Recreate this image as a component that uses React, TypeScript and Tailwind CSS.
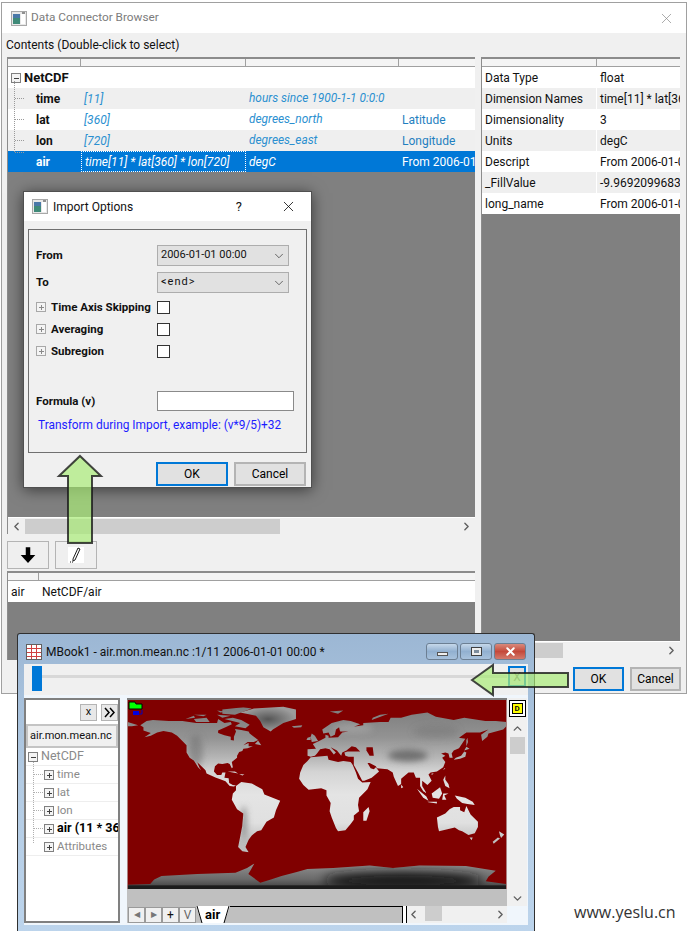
import { ChevronDown, ChevronLeft, ChevronRight, ChevronUp, X } from "lucide-react";

const contentRows = [
  { name: "time", dims: "[11]", units: "hours since 1900-1-1 0:0:0", desc: "", shade: true },
  { name: "lat", dims: "[360]", units: "degrees_north", desc: "Latitude", shade: false },
  { name: "lon", dims: "[720]", units: "degrees_east", desc: "Longitude", shade: true },
];

const attrRows = [
  ["Data Type", "float"],
  ["Dimension Names", "time[11] * lat[360] * lon[720]"],
  ["Dimensionality", "3"],
  ["Units", "degC"],
  ["Descript", "From 2006-01-01 00:00"],
  ["_FillValue", "-9.96920996838687e+36"],
  ["long_name", "From 2006-01-01 00:00"],
];

// rough coastlines as lon,lat pairs
const land: number[][][] = [
  [[-168,66],[-162,70],[-156,71],[-141,70],[-128,70],[-115,68],[-108,68],[-95,68],[-94,72],[-88,68],[-82,69],[-81,67],[-87,64],[-94,61],[-94,58.5],[-88,56.5],[-82,55],[-82,52],[-79,51.5],[-79,55],[-77,60],[-78,62.5],[-72,61.5],[-65,60],[-64,58],[-60,55],[-56,52],[-60,50],[-66,50],[-70,47],[-65,49],[-65,46],[-61,46],[-66,44],[-70,43.5],[-71,41.5],[-74,40.5],[-76,37],[-76,35],[-81,31],[-80,26],[-81,25],[-83,29],[-85,30],[-90,29],[-94,29.5],[-97,27],[-98,22],[-95,18.5],[-91,18.5],[-90,21],[-87,21],[-88,16],[-84,15.5],[-83.5,11],[-80,9],[-77,8.5],[-79,7.5],[-83,8],[-87,12.5],[-92,14.5],[-96,16],[-105,20],[-106,23],[-112,29],[-114,31],[-112,26],[-110,23],[-113,26],[-117,32.5],[-121,35],[-124,40],[-124,47],[-128,51],[-133,56],[-138,59],[-146,60.5],[-152,59],[-158,56],[-164,54.5],[-158,58.5],[-165,61],[-165,64]],
  [[-80,73],[-72,71],[-64,66.5],[-68,63],[-78,65],[-73,68],[-88,72]],
  [[-117,72],[-105,73],[-102,69],[-115,69]],
  [[-125,72],[-117,75],[-116,73]],
  [[-90,77],[-78,76],[-62,82],[-70,83],[-90,81]],
  [[-95,76],[-82,75],[-90,73]],
  [[-117,76],[-105,76],[-108,74.5]],
  [[-95,80],[-87,79],[-92,78]],
  [[-59,48],[-53,47],[-56,51.5]],
  [[-85,22],[-75,20],[-78,22]],
  [[-74,19.5],[-69,19],[-71,18]],
  [[-77,8],[-72,12],[-62,10.5],[-52,5],[-50,0],[-44,-2.5],[-35,-6],[-39,-15],[-41,-22],[-48,-26],[-53,-34],[-57,-35],[-62,-39],[-65,-43],[-68,-50],[-65,-55],[-71,-54],[-75,-50],[-73,-40],[-71,-30],[-70,-18],[-76,-14],[-81,-5],[-80,1],[-77,4]],
  [[-6,35.5],[10,37],[11,33],[20,31],[25,32],[32,31],[34,28],[37,21],[39,15],[43,11.5],[51,12],[48,5],[40,-3],[39,-10],[40,-16],[35,-20],[35,-24],[32,-28],[27,-34],[20,-35],[18,-32],[14,-22],[12,-16],[13,-8],[9,-1],[9,4],[4,6],[-4,5],[-8,4.5],[-13,9],[-17,15],[-16,21],[-13,28],[-9,32]],
  [[49,-12],[50,-16],[47,-25],[44,-25],[44,-17]],
  [[-9,37],[-9,43],[-1,43.5],[-4,48],[2,51],[8,54],[8,57],[11,56],[11,54],[20,54.5],[24,59],[30,60],[22,60],[21,64],[24,66],[18,62],[17,57],[13,55],[11,59],[6,58],[5,62],[14,68],[25,71],[32,70],[41,67],[35,64.5],[44,66],[44,68],[60,69],[68,69],[70,73],[80,73],[90,76],[105,78],[113,74],[130,71],[140,73],[160,70],[170,70],[180,69],[180,65],[177,62],[170,60],[163,58],[162,55],[157,51],[156,57],[163,62],[155,59],[142,59],[135,54],[141,53],[135,44],[130,42],[128,39],[129,35],[126,35],[125,39],[122,40],[118,39],[122,37],[119,35],[122,31],[120,26],[114,22],[108,21],[106,19],[109,13],[105,9],[100,13],[100,8],[104,1.5],[101,3],[98,8],[98,16],[94,16],[92,21],[87,21],[80,15],[80,10],[77,8],[73,17],[72,21],[67,24],[57,25],[56,27],[50,30],[48,30],[51,25],[54,24],[56,26],[59,22],[52,16],[45,13],[43,13],[39,21],[35,28],[35,36],[30,36],[27,37],[26,40],[29,41],[41,41],[37,45],[33,46],[28,42],[24,40],[23,37],[19,42],[13,45],[18,40],[16,38],[12,43],[8,44],[3,43],[0,39],[-2,37],[-6,36]],
  [[-180,69],[-170,66],[-176,65],[-180,65]],
  [[-5,50],[1,51],[-2,56],[-5,58],[-6,55]],
  [[-10,52],[-6,52],[-6,55],[-9,54]],
  [[-24,65],[-14,66],[-15,64],[-22,63.5]],
  [[12,79],[25,80],[20,77]],
  [[52,71],[68,77],[60,76],[53,73]],
  [[130,33],[136,34],[141,36],[142,40],[140,41],[137,37],[132,35]],
  [[140,42],[145,43.5],[142,45.5]],
  [[142,46],[143.5,50],[143,54],[142,52]],
  [[80,9.5],[82,7],[80,6]],
  [[120,23],[122,25],[121,25]],
  [[109,18.5],[111,20],[109,20]],
  [[120,14],[122,18],[122,14],[125,10],[126,6],[122,8]],
  [[95,5.5],[104,-2],[106,-6],[101,-3]],
  [[105,-7],[114,-7],[114,-8.5],[106,-7.5]],
  [[109,1],[117,7],[119,1],[116,-4],[110,-3]],
  [[119,-5],[120,1],[125,1],[121,-1],[123,-5]],
  [[131,-1],[141,-3],[148,-7],[150,-10],[143,-9],[138,-8],[133,-4]],
  [[114,-22],[122,-18],[126,-14],[130,-12],[136,-12],[136,-15],[140,-17],[142,-11],[146,-19],[153,-26],[153,-31],[150,-37],[144,-38.5],[138,-35],[135,-34],[131,-31.5],[124,-33],[116,-35],[115,-31]],
  [[145,-41],[148,-41],[147,-43.5]],
  [[173,-35],[178,-38],[175,-41.5],[174,-39]],
  [[172,-41],[174,-42],[168,-47],[167,-45]],
];

const greenland = [[-73,78],[-60,82],[-32,83.5],[-20,81],[-20,72],[-32,68],[-42,62],[-44,60],[-51,64],[-54,70],[-58,75]];
const caspian = [[47,45],[53,45],[54,37],[50,37],[47,42]];

const antarctica =
  "20,585 20,572 88,570 100,556 122,546 230,540 345,536 380,522 402,508 392,526 384,540 420,566 452,556 484,546 530,534 562,525 640,522 750,514 820,522 900,514 1040,516 1130,530 1108,548 1100,562 1161,570 1161,585";

const toPoints = (ring: number[][]) =>
  ring.map(([lon, lat]) => `${20 + ((lon + 180) / 360) * 1142},${15 + ((90 - lat) / 180) * 570}`).join(" ");

function AppIcon() {
  return (
    <svg width="16" height="15" viewBox="0 0 16 15" className="shrink-0">
      <rect x="0.5" y="0.5" width="15" height="14" fill="#e8e8e8" stroke="#a8a8a8" />
      <rect x="2" y="3" width="7" height="10" fill="#3f8a78" />
      <rect x="2" y="3" width="7" height="4" fill="#4a78a8" />
      <rect x="10" y="3" width="4" height="10" fill="#ffffff" />
      <rect x="11" y="1" width="3" height="2" fill="#909090" />
    </svg>
  );
}

function PlusBox({ minus, dark }: { minus?: boolean; dark?: boolean }) {
  const c = dark ? "#404040" : "#8a8a8a";
  return (
    <svg width="10" height="10" viewBox="0 0 10 10" className="shrink-0">
      <rect x="0.5" y="0.5" width="9" height="9" fill="#f4f4f4" stroke={dark ? "#808080" : "#a8a8a8"} />
      <path d="M2.5 5h5" stroke={c} shapeRendering="crispEdges" />
      {!minus && <path d="M5 2.5v5" stroke={c} shapeRendering="crispEdges" />}
    </svg>
  );
}

function HeaderStrip({ stops }: { stops: number[] }) {
  return (
    <div className="h-[8px] shrink-0 bg-[#f4f4f4] border-b border-[#a0a0a0] flex">
      {stops.map((w, i) => (
        <div key={i} style={{ width: w }} className="border-r border-[#a0a0a0] shrink-0" />
      ))}
    </div>
  );
}

function ScrollBar({ thumb, left = 17 }: { thumb: number; left?: number }) {
  return (
    <div className="h-[17px] shrink-0 bg-[#f0f0f0] flex items-center justify-between border-t border-white relative">
      <ChevronLeft size={13} strokeWidth={2.6} className="text-[#606060] ml-[2px]" />
      <div style={{ left, width: thumb }} className="absolute top-[1px] h-[15px] bg-[#cdcdcd]" />
      <ChevronRight size={13} strokeWidth={2.6} className="text-[#606060] mr-[2px]" />
    </div>
  );
}

function Btn({ label, primary, className }: { label: string; primary?: boolean; className: string }) {
  return (
    <div
      className={`flex items-center justify-center bg-[#e1e1e1] text-black text-[12px] ${
        primary ? "border-2 border-[#0078d7]" : "border-2 border-[#b4b4b4]"
      } ${className}`}
    >
      {label}
    </div>
  );
}

function Combo({ text, wide }: { text: string; wide?: boolean }) {
  return (
    <div className="w-[132px] h-[21px] bg-[#e1e1e1] border border-[#adadad] flex items-center justify-between pl-[3px] pr-[2px] text-[11px]">
      <span className={wide ? "tracking-[1px]" : ""}>{text}</span>
      <ChevronDown size={14} strokeWidth={1.3} className="text-[#404040]" />
    </div>
  );
}

function CheckRow({ label }: { label: string }) {
  return (
    <div className="h-[22px] flex items-center">
      <div className="w-[121px] flex items-center gap-[5px] font-bold text-[11.5px] whitespace-nowrap">
        <PlusBox />
        <span className="pt-[1px]">{label}</span>
      </div>
      <div className="w-[13px] h-[13px] bg-white border border-[#333333]" />
    </div>
  );
}

function ImportDialog() {
  return (
    <div className="absolute left-[23px] top-[191px] w-[289px] h-[297px] bg-[#f0f0f0] border border-[#505050] shadow-[0_2px_14px_rgba(0,0,0,0.55)] flex flex-col text-[#111111]">
      <div className="h-[29px] bg-white flex items-center pl-[8px] shrink-0">
        <AppIcon />
        <span className="ml-[5px] text-[12px]">Import Options</span>
        <span className="ml-auto mr-[38px] text-[13px]">?</span>
        <X size={17} strokeWidth={1.1} className="mr-[14px] text-black" />
      </div>
      <div className="mx-[4px] mt-[8px] h-[224px] border border-[#707070] px-[7px] pt-[15px] flex flex-col">
        <div className="h-[21px] flex items-center mb-[6px]">
          <span className="w-[121px] pt-[1px] font-bold text-[11.5px]">From</span>
          <Combo text="2006-01-01 00:00" />
        </div>
        <div className="h-[21px] flex items-center mb-[3px]">
          <span className="w-[121px] pt-[1px] font-bold text-[11.5px]">To</span>
          <Combo text="<end>" wide />
        </div>
        <CheckRow label="Time Axis Skipping" />
        <CheckRow label="Averaging" />
        <CheckRow label="Subregion" />
        <div className="h-[20px] mt-[29px] flex items-center">
          <span className="w-[121px] pt-[1px] font-bold text-[11.5px]">Formula (v)</span>
          <div className="w-[137px] h-[20px] bg-white border border-[#8a8a8a]" />
        </div>
        <div className="mt-[6px] ml-[2px] text-[11.9px] text-[#1c1cff] whitespace-nowrap">
          Transform during Import, example: (v*9/5)+32
        </div>
      </div>
      <div className="flex justify-end gap-[6px] mt-[9px] pr-[5px]">
        <Btn label="OK" primary className="w-[72px] h-[24px]" />
        <Btn label="Cancel" className="w-[72px] h-[24px]" />
      </div>
    </div>
  );
}

function MainWindow() {
  return (
    <div className="absolute left-[1px] top-[2px] w-[686px] h-[692px] bg-[#f0f0f0] border border-[#a0a0a0] flex flex-col text-[12px] text-[#111111]">
      <div className="h-[30px] bg-white flex items-center pl-[9px] pr-[11px] shrink-0">
        <AppIcon />
        <span className="ml-[4px] text-[#7c7c7c] text-[11.8px]">Data Connector Browser</span>
        <X size={17} strokeWidth={1} className="ml-auto text-[#8a8a8a]" />
      </div>
      <div className="h-[24px] pl-[4px] flex items-center shrink-0">Contents (Double-click to select)</div>

      <div className="flex pl-[5px] gap-[6px] shrink-0">
        <div className="w-[468px] flex flex-col">
          {/* variable list */}
          <div className="h-[477px] border-t-2 border-l border-[#8c8c8c] bg-[#808080] flex flex-col relative">
            <HeaderStrip stops={[73, 165, 153]} />
            <div className="h-[21px] bg-white flex items-center pl-[3px] gap-[3px] font-bold text-[13px]">
              <PlusBox minus dark />
              NetCDF
            </div>
            {contentRows.map((r) => (
              <div
                key={r.name}
                className={`h-[21px] grid grid-cols-[73px_165px_153px_1fr] items-center ${r.shade ? "bg-[#efefef]" : "bg-white"}`}
              >
                <span className="pl-[28px] font-bold">{r.name}</span>
                <span className="pl-[3px] italic text-[#2b8fd0]">{r.dims}</span>
                <span className="pl-[3px] italic text-[#2b8fd0] text-[11.9px] whitespace-nowrap">{r.units}</span>
                <span className="pl-[3px] text-[#1f7fc0]">{r.desc}</span>
              </div>
            ))}
            <div className="h-[21px] bg-[#0078d7] text-white grid grid-cols-[73px_165px_153px_1fr] items-center">
              <span className="pl-[28px] font-bold">air</span>
              <span className="pl-[3px] h-full flex items-center italic border border-dotted border-white whitespace-nowrap">
                time[11] * lat[360] * lon[720]
              </span>
              <span className="pl-[3px] italic">degC</span>
              <span className="pl-[3px] whitespace-nowrap overflow-hidden">From 2006-01</span>
            </div>
            {/* tree guide */}
            <svg className="absolute left-[2px] top-[22px]" width="20" height="82" viewBox="0 0 20 82">
              <path
                d="M4.5 0V71M5 17H14M5 38H14M5 59H14M5 71H14"
                fill="none"
                stroke="#9a9a9a"
                strokeDasharray="1 1"
                shapeRendering="crispEdges"
              />
            </svg>
            <div className="mt-auto">
              <ScrollBar thumb={255} />
            </div>
          </div>

          <div className="flex gap-[6px] mt-[7px]">
            <div className="w-[42px] h-[28px] border border-[#b4b4b4] bg-[#efefef] flex items-center justify-center">
              <svg width="18" height="18" viewBox="0 0 16 16">
                <path d="M6 1h4v7h4.5L8 15 1.5 8H6z" fill="#000000" />
              </svg>
            </div>
            <div className="w-[42px] h-[28px] border border-[#b4b4b4] bg-[#efefef] flex items-center justify-center">
              <svg width="16" height="16" viewBox="0 0 16 16" className="bg-white">
                <path d="M10 1l2 1-5 11-2 1 0-2z" fill="#ffffff" stroke="#000000" strokeWidth="0.9" />
                <path d="M2 15h1M4 15h1" stroke="#000000" />
              </svg>
            </div>
          </div>

          {/* selected list */}
          <div className="mt-[2px] h-[89px] border-t-2 border-l border-[#8c8c8c] bg-[#808080] flex flex-col">
            <HeaderStrip stops={[31]} />
            <div className="h-[21px] bg-white flex items-center pl-[3px]">
              <span className="w-[31px]">air</span>
              <span>NetCDF/air</span>
            </div>
          </div>
        </div>

        {/* attributes list */}
        <div className="w-[199px] h-[601px] border-t-2 border-l border-[#8c8c8c] bg-[#808080] flex flex-col">
          <HeaderStrip stops={[115]} />
          {attrRows.map(([k, v], i) => (
            <div
              key={k}
              className={`h-[21px] flex items-center whitespace-nowrap overflow-hidden ${i % 2 ? "bg-[#efefef]" : "bg-white"}`}
            >
              <span className="w-[115px] shrink-0 pl-[3px] border-r border-white h-full flex items-center">{k}</span>
              <span className="pl-[3px]">{v}</span>
            </div>
          ))}
          <div className="mt-auto">
            <ScrollBar thumb={81} left={0} />
          </div>
        </div>
      </div>

      <div className="flex justify-end gap-[6px] mt-[7px] pr-[5px]">
        <Btn label="OK" primary className="w-[51px] h-[24px]" />
        <Btn label="Cancel" className="w-[51px] h-[24px]" />
      </div>
    </div>
  );
}

function WinBtn({ kind }: { kind: "min" | "max" | "close" }) {
  const bg =
    kind === "close"
      ? "bg-gradient-to-b from-[#d9897c] via-[#c4483a] to-[#d2796c]"
      : "bg-gradient-to-b from-[#c6d8ea] via-[#92b0d0] to-[#a8c2dc]";
  return (
    <div className={`w-[32px] h-[17px] rounded-[3px] border border-[#6c7f93] flex items-center justify-center ${bg}`}>
      {kind === "min" && <div className="w-[11px] h-[4px] mt-[4px] bg-[#eeeeee] border border-[#555555]" />}
      {kind === "max" && (
        <div className="w-[11px] h-[9px] bg-[#eeeeee] border border-[#404040] flex items-center justify-center">
          <div className="w-[5px] h-[3px] bg-[#7d8d9d]" />
        </div>
      )}
      {kind === "close" && <X size={13} strokeWidth={3.6} className="text-white" />}
    </div>
  );
}

function TreeItem({ label, bold }: { label: string; bold?: boolean }) {
  return (
    <div className="h-[18px] border-b border-[#eeeeee] flex items-center pl-[18px] gap-[3px] whitespace-nowrap overflow-hidden">
      <PlusBox dark />
      <span className={bold ? "font-bold text-black text-[12.5px]" : "text-[#8a8a8a] text-[11.5px]"}>{label}</span>
    </div>
  );
}

function NavBtn({ children }: { children: React.ReactNode }) {
  return (
    <div className="w-[17px] h-[16px] bg-[#f0f0f0] border border-[#9a9a9a] flex items-center justify-center text-[12px] leading-none shrink-0">
      {children}
    </div>
  );
}

function WorldMap() {
  return (
    <svg viewBox="20 15 1142 570" width="380" height="189" className="block">
      <defs>
        <linearGradient id="land" gradientUnits="userSpaceOnUse" x1="0" y1="15" x2="0" y2="585">
          <stop offset="0.05" stopColor="#7e7e7e" />
          <stop offset="0.2" stopColor="#939393" />
          <stop offset="0.3" stopColor="#b4b4b4" />
          <stop offset="0.38" stopColor="#d4d4d4" />
          <stop offset="0.5" stopColor="#e4e4e4" />
          <stop offset="0.65" stopColor="#e0e0e0" />
          <stop offset="0.75" stopColor="#bdbdbd" />
        </linearGradient>
        <radialGradient id="green">
          <stop offset="0" stopColor="#555555" />
          <stop offset="1" stopColor="#9c9c9c" />
        </radialGradient>
        <linearGradient id="ice" gradientUnits="userSpaceOnUse" x1="0" y1="510" x2="0" y2="585">
          <stop offset="0" stopColor="#909090" />
          <stop offset="0.6" stopColor="#6a6a6a" />
          <stop offset="1" stopColor="#3a3a3a" />
        </linearGradient>
        <filter id="soft" x="-50%" y="-50%" width="200%" height="200%">
          <feGaussianBlur stdDeviation="10" />
        </filter>
        <filter id="softer" x="-50%" y="-100%" width="200%" height="300%">
          <feGaussianBlur stdDeviation="16" />
        </filter>
        <clipPath id="landClip">
          {land.map((ring, i) => (
            <polygon key={i} points={toPoints(ring)} />
          ))}
        </clipPath>
        <clipPath id="iceClip">
          <polygon points={antarctica} />
        </clipPath>
      </defs>
      <rect x="20" y="15" width="1142" height="570" fill="#800000" />
      <g clipPath="url(#landClip)">
        <rect x="20" y="15" width="1142" height="570" fill="url(#land)" />
        <g filter="url(#soft)" fill="#707070">
          <ellipse cx="225" cy="170" rx="22" ry="50" opacity="0.55" />
          <ellipse cx="370" cy="385" rx="8" ry="50" opacity="0.8" />
          <ellipse cx="865" cy="182" rx="60" ry="18" />
          <ellipse cx="950" cy="110" rx="70" ry="20" opacity="0.35" />
          <ellipse cx="700" cy="100" rx="60" ry="14" fill="#c0c0c0" opacity="0.35" />
        </g>
      </g>
      <polygon points={toPoints(greenland)} fill="url(#green)" />
      <polygon points={toPoints(caspian)} fill="#800000" />
      <g clipPath="url(#iceClip)">
        <rect x="20" y="500" width="1142" height="85" fill="url(#ice)" />
        <g filter="url(#softer)" fill="#141414">
          <ellipse cx="850" cy="560" rx="240" ry="26" />
        </g>
        <rect x="20" y="574" width="1142" height="11" fill="#1c1c1c" />
      </g>
    </svg>
  );
}

function BookWindow() {
  return (
    <div className="absolute left-[17px] top-[633px] w-[518px] h-[298px] rounded-t-[3px] border-t border-r border-l border-[#303030] bg-gradient-to-b from-[#9cb7d4] via-[#b4cce4] to-[#bcd4ec] flex flex-col text-[#111111] text-[12px]">
      <div className="h-[30px] pt-[5px] flex items-center pl-[8px] pr-[8px] shrink-0">
        <svg width="16" height="16" viewBox="0 0 16 16" className="shrink-0">
          <rect x="0.5" y="0.5" width="15" height="15" fill="#ffffff" stroke="#606060" />
          <path d="M1 4h14M1 8h14M1 12h14M5 1v14M10 1v14" stroke="#d04040" shapeRendering="crispEdges" />
        </svg>
        <span className="ml-[4px] text-[12px] whitespace-nowrap">MBook1 - air.mon.mean.nc :1/11 2006-01-01 00:00 *</span>
        <div className="ml-auto flex gap-[2px]">
          <WinBtn kind="min" />
          <WinBtn kind="max" />
          <WinBtn kind="close" />
        </div>
      </div>

      <div className="mx-[6px] h-[31px] bg-[#f0f0f0] flex items-start pt-[2px] pl-[8px] relative shrink-0">
        <div className="w-[10px] h-[25px] bg-[#0078d7] shrink-0" />
        <div className="w-[465px] h-[3px] mt-[9px] bg-[#d8d8d8]" />
        <div className="ml-[1px] w-[18px] h-[21px] border-2 border-[#0078d7] bg-[#e1e1e1] flex items-center justify-center text-[#777777]">
          X
        </div>
      </div>

      <div className="mx-[6px] h-[230px] bg-[#f0f6fc] flex pt-[3px] gap-[7px]">
        {/* organizer panel */}
        <div className="w-[96px] h-[225px] border-2 border-[#808080] bg-white flex flex-col shrink-0">
          <div className="h-[24px] flex justify-end items-center gap-[4px] shrink-0">
            <div className="w-[17px] h-[17px] border border-[#b4b4b4] bg-[#e8e8e8] flex items-center justify-center text-[11px]">x</div>
            <div className="w-[17px] h-[17px] border border-[#b4b4b4] bg-[#e8e8e8] flex items-center justify-center">
              <svg width="11" height="11" viewBox="0 0 11 11">
                <path d="M1 1l4 4.5-4 4.5M6 1l4 4.5-4 4.5" fill="none" stroke="#000000" strokeWidth="1.5" />
              </svg>
            </div>
          </div>
          <div className="h-[24px] bg-[#f0f0f0] border-2 border-[#c4c4c4] flex items-center pl-[2px] text-[11px] whitespace-nowrap overflow-hidden shrink-0">
            air.mon.mean.nc
          </div>
          <div className="relative">
            <div className="h-[18px] flex items-center pl-[2px] gap-[3px] text-[12.5px] text-[#8a8a8a] border-b border-[#eeeeee]">
              <PlusBox minus dark />
              NetCDF
            </div>
            <TreeItem label="time" />
            <TreeItem label="lat" />
            <TreeItem label="lon" />
            <TreeItem label="air (11 * 360 * 720)" bold />
            <TreeItem label="Attributes" />
            <svg className="absolute left-[6px] top-[14px]" width="12" height="82" viewBox="0 0 12 82">
              <path
                d="M1.5 0V82M2 12H12M2 30H12M2 48H12M2 66H12M2 82H12"
                fill="none"
                stroke="#b0b0b0"
                strokeDasharray="1 1"
                shapeRendering="crispEdges"
              />
            </svg>
          </div>
        </div>

        {/* graph */}
        <div className="w-[400px] flex flex-col shrink-0">
          <div className="flex h-[208px] shrink-0">
            <div className="w-[380px] h-[208px] bg-[#c0c0c0] border-t-2 border-[#808080] relative shrink-0">
              <WorldMap />
              <svg className="absolute left-[1px] top-[1px]" width="17" height="15" viewBox="0 0 17 15">
                <path d="M1 1h6l1 2h6v5H1z" fill="#00ff00" stroke="#000000" />
                <path d="M6 13h8V9" fill="none" stroke="#0000c0" />
                <rect x="5" y="10" width="6" height="4" fill="#0000e0" />
              </svg>
            </div>
            <div className="w-[20px] bg-[#f0f0f0] flex flex-col items-center shrink-0">
              <div className="w-[17px] h-[17px] mt-[2px] border border-black bg-white flex items-center justify-center">
                <div className="w-[11px] h-[11px] bg-[#ffff00] border border-black text-[8px] font-bold leading-none flex items-center justify-center">
                  D
                </div>
              </div>
              <ChevronUp size={13} strokeWidth={2.6} className="text-[#606060] mt-[5px]" />
              <div className="w-[15px] h-[17px] mt-[2px] bg-[#cdcdcd]" />
              <ChevronDown size={13} strokeWidth={2.6} className="text-[#606060] mt-auto mb-[1px]" />
            </div>
          </div>
          <div className="h-[17px] flex bg-[#c0c0c0] w-[380px] shrink-0">
            <div className="flex items-center pl-[1px] shrink-0">
              <NavBtn>
                <span className="text-[#777777] text-[8px]">◀</span>
              </NavBtn>
              <NavBtn>
                <span className="text-[#777777] text-[8px]">▶</span>
              </NavBtn>
              <NavBtn>+</NavBtn>
              <NavBtn>
                <span className="text-[#666666]">V</span>
              </NavBtn>
            </div>
            <svg width="34" height="17" viewBox="0 0 34 17" className="shrink-0">
              <path d="M0 0L6 17H28L34 0z" fill="#ffffff" />
              <path d="M1 0L6 17M28 17L33 0" fill="none" stroke="#000000" />
              <text x="9" y="13" fontSize="13" fontWeight="700" fontFamily="Roboto, sans-serif">air</text>
            </svg>
            <div className="w-[172px] border-t border-black shrink-0" />
            <div className="w-[5px] border-x border-black bg-white shrink-0" />
            <div className="flex-1 bg-[#f0f0f0] flex items-center justify-between relative">
              <ChevronLeft size={13} strokeWidth={2.6} className="text-[#606060]" />
              <div className="absolute left-[18px] top-0 w-[17px] h-[15px] bg-[#cdcdcd]" />
              <ChevronRight size={13} strokeWidth={2.6} className="text-[#606060]" />
            </div>
          </div>
        </div>
      </div>
    </div>
  );
}

function Arrows() {
  return (
    <>
      <svg className="absolute left-[56px] top-[454px]" width="48" height="92" viewBox="0 0 48 92">
        <path
          d="M24 2L45 22H36V89H12V22H3z"
          fill="rgba(170,235,120,0.7)"
          stroke="rgba(25,25,25,0.8)"
          strokeWidth="2"
        />
      </svg>
      <svg className="absolute left-[469px] top-[662px]" width="102" height="36" viewBox="0 0 102 36">
        <path
          d="M3 18L24 3V11H99V25H24V33z"
          fill="rgba(170,235,120,0.7)"
          stroke="rgba(25,25,25,0.8)"
          strokeWidth="2"
        />
      </svg>
    </>
  );
}

export default function App() {
  return (
    <div className="relative w-[687px] h-[931px] overflow-hidden bg-white [font-family:Roboto,sans-serif]">
      <MainWindow />
      <ImportDialog />
      <BookWindow />
      <Arrows />
      <div className="absolute left-[574px] top-[900px] text-[16px] text-[#333333] [font-family:'Open_Sans',sans-serif]">
        www.yeslu.cn
      </div>
    </div>
  );
}
